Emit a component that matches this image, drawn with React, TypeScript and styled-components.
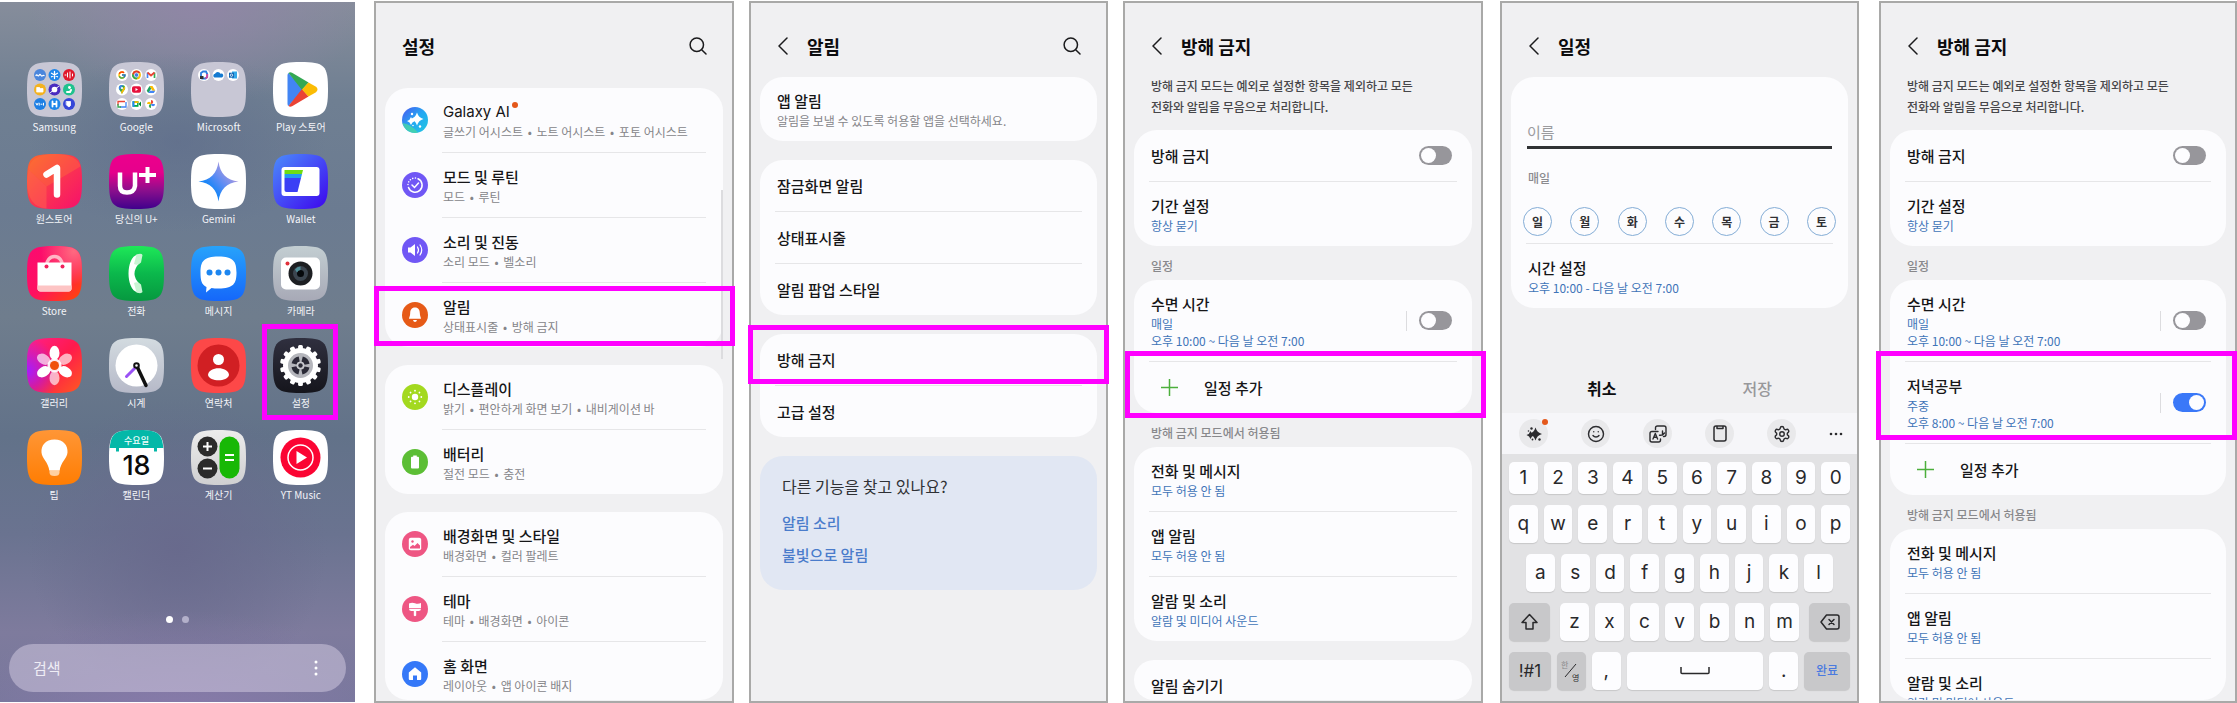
import React, { Fragment, useId } from "react";
import styled, { createGlobalStyle, css } from "styled-components";
import { FcGoogle } from "react-icons/fc";
import { Settings as GearIcon, Smile } from "lucide-react";

const GlobalStyle = createGlobalStyle`
  *, *::before, *::after { box-sizing: border-box; }
  body {
    margin: 0;
    background: #ffffff;
    font-family: "Noto Sans CJK KR", "Noto Sans", sans-serif;
    color: #1b1b1d;
  }
  button, input { font-family: inherit; }
  button {
    margin: 0;
    padding: 0;
    border: 0;
    background: none;
    color: inherit;
    text-align: left;
    cursor: pointer;
  }
  h1, h2, p { margin: 0; font-weight: inherit; }
`;

/* ---------- page and screens ---------- */

const Board = styled.main`
  display: grid;
  grid-template-columns: 355fr 19px 360fr 15px 359fr 15px 360fr 17px 359fr 20px 358fr;
  grid-template-rows: minmax(0, 1fr);
  height: 100vh;
  min-height: 680px;
  padding-top: 1px;
`;

const Screen = styled.section<{ $slot: number }>`
  grid-column: ${(p) => p.$slot * 2 - 1};
  position: relative;
  display: flex;
  flex-direction: column;
  min-width: 0;
  min-height: 0;
  padding-bottom: 1px;
  border: 2px solid #a9a9a8;
  background: #f0f0f2;
`;

const Header = styled.header`
  flex: none;
  display: flex;
  align-items: center;
  padding: 30px 25px 0 26px;
`;

const Heading = styled.h1`
  flex: 1;
  font-size: 18px;
  line-height: 26px;
  font-weight: 700;
  color: #0c0c0e;
`;

const IconButton = styled.button`
  display: grid;
  place-items: center;
`;

const BackButton = styled(IconButton)`
  width: 12px;
  height: 26px;
  margin-right: 18px;
`;

const Card = styled.section<{ $shrink?: boolean }>`
  flex: none;
  border-radius: 23px;
  background: #fcfcfe;
  ${(p) =>
    p.$shrink &&
    css`
      flex: 0 1 auto;
      min-height: 0;
      overflow: hidden;
    `}
`;

const CardStack = styled.div<{ $top: number; $gap?: number }>`
  flex: 0 1 auto;
  display: flex;
  flex-direction: column;
  min-height: 0;
  padding: ${(p) => p.$top}px 9px 0;
  & > section + section {
    margin-top: ${(p) => p.$gap ?? 19}px;
  }
`;

const Divider = styled.hr<{ $icon?: boolean }>`
  height: 1px;
  margin: 0 ${(p) => (p.$icon ? 17 : 15)}px 0 ${(p) => (p.$icon ? 57 : 15)}px;
  border: 0;
  background: #e6e6e8;
`;

const rowStyle = css<{ $h: number }>`
  position: relative;
  display: flex;
  align-items: center;
  width: 100%;
  height: ${(p) => p.$h}px;
  padding: 0 17px;
`;
const RowButton = styled.button<{ $h: number }>`
  ${rowStyle}
`;
const RowBox = styled.div<{ $h: number }>`
  ${rowStyle}
  padding-right: 20px;
`;

const RowIcon = styled.svg`
  flex: none;
  width: 26px;
  height: 26px;
  margin-right: 15px;
`;

const RowText = styled.span`
  flex: 1;
  display: flex;
  flex-direction: column;
  min-width: 0;
  white-space: nowrap;
`;

const RowTitle = styled.span<{ $latin?: boolean }>`
  font-size: 15px;
  line-height: 22px;
  font-weight: 500;
  color: #161618;
  ${(p) =>
    p.$latin &&
    css`
      font-family: Inter, "Noto Sans CJK KR", sans-serif;
      font-weight: 400;
    `}
`;

const RowSub = styled.span<{ $blue?: boolean }>`
  font-size: 12px;
  line-height: 17px;
  color: ${(p) => (p.$blue ? "#3f74b8" : "#858589")};
`;

const Bullet = styled.span`
  margin: 0 2px;
`;

const NewDot = styled.i`
  display: inline-block;
  width: 6px;
  height: 6px;
  margin-left: 2px;
  border-radius: 50%;
  background: #e4581b;
  vertical-align: 9px;
`;

const Highlight = styled.span<{ $edges: string }>`
  position: absolute;
  z-index: 2;
  inset: ${(p) => p.$edges};
  border: 5px solid #ff00ff;
  pointer-events: none;
`;

const ScrollThumb = styled.span`
  position: absolute;
  top: 187px;
  right: 9px;
  width: 2px;
  height: 169px;
  background: #dcdcdf;
`;

const Toggle = styled.input`
  appearance: none;
  flex: none;
  width: 33px;
  height: 19px;
  margin: 0;
  padding: 2px;
  border-radius: 10px;
  background: #97969b;
  cursor: pointer;
  &::before {
    content: "";
    display: block;
    width: 15px;
    height: 15px;
    border-radius: 50%;
    background: #fdfdff;
  }
  &:checked {
    background: #3a78f8;
  }
  &:checked::before {
    margin-left: 14px;
  }
`;

const ToggleRule = styled.span`
  width: 1px;
  height: 20px;
  margin-right: 12px;
  background: #dcdcdf;
`;

const SearchIcon = () => (
  <svg width="18" height="18" viewBox="0 0 18 18" fill="none" stroke="#1b1b1d" strokeWidth="1.5" strokeLinecap="round">
    <circle cx="7.8" cy="7.8" r="6.7" />
    <path d="M12.7 12.7 17 17" />
  </svg>
);

const BackIcon = () => (
  <svg width="12" height="18" viewBox="0 0 12 18" fill="none" stroke="#1b1b1d" strokeWidth="1.5" strokeLinecap="round" strokeLinejoin="round">
    <path d="M10 1 2 9l8 8" />
  </svg>
);

const TopBar = ({ title, back, search }: { title: string; back?: boolean; search?: boolean }) => (
  <Header>
    {back && (
      <BackButton type="button" aria-label="뒤로">
        <BackIcon />
      </BackButton>
    )}
    <Heading>{title}</Heading>
    {search && (
      <IconButton type="button" aria-label="검색">
        <SearchIcon />
      </IconButton>
    )}
  </Header>
);

interface RowProps {
  title: string;
  subs?: string[];
  blue?: boolean;
  icon?: React.ReactNode;
  latin?: boolean;
  edges?: string;
}

const rowHeight = (subs: string[]) => [51, 64, 81][subs.length];

const SubText = ({ text }: { text: string }) => (
  <>
    {text.split("•").map((part, i) => (
      <Fragment key={part}>
        {i > 0 && <Bullet>•</Bullet>}
        {part}
      </Fragment>
    ))}
  </>
);

const Row = ({ title, subs = [], blue, icon, latin, edges }: RowProps) => (
  <RowButton type="button" $h={rowHeight(subs)}>
    {icon && <RowIcon viewBox="-13 -13 26 26">{icon}</RowIcon>}
    <RowText>
      <RowTitle $latin={latin}>
        {title}
        {latin && <NewDot />}
      </RowTitle>
      {subs.map((s) => (
        <RowSub key={s} $blue={blue}>
          <SubText text={s} />
        </RowSub>
      ))}
    </RowText>
    {edges && <Highlight $edges={edges} />}
  </RowButton>
);

const ToggleRow = ({ title, subs = [], on, edges }: RowProps & { on?: boolean }) => {
  const id = useId();
  return (
    <RowBox $h={rowHeight(subs)}>
      <RowText>
        <RowTitle as="label" htmlFor={id}>
          {title}
        </RowTitle>
        {subs.map((s) => (
          <RowSub key={s} $blue>
            {s}
          </RowSub>
        ))}
      </RowText>
      {subs.length > 0 && <ToggleRule />}
      <Toggle id={id} type="checkbox" role="switch" defaultChecked={on} />
      {edges && <Highlight $edges={edges} />}
    </RowBox>
  );
};

/* ---------- home screen ---------- */

const Home = styled.section`
  grid-column: 1;
  display: flex;
  flex-direction: column;
  min-width: 0;
  margin: 1px 0;
  padding: 60px 9px 10px;
  background:
    radial-gradient(ellipse 150px 90px at 50% 20%, rgba(92, 106, 138, 0.6), rgba(92, 106, 138, 0) 100%),
    radial-gradient(ellipse 170px 100px at 56% 0%, #9086a6, rgba(144, 134, 166, 0) 100%),
    radial-gradient(ellipse 230px 120px at 50% 104%, #8a7bac, rgba(138, 123, 172, 0) 100%),
    radial-gradient(ellipse 150px 150px at 50% 78%, rgba(104, 105, 140, 0.9), rgba(104, 105, 140, 0) 100%),
    linear-gradient(180deg, #868d9b 0%, #6f7f92 14%, #6b7b91 30%, #6f7d8d 45%, #627289 62%, #6a7390 76%, #7e7b9d 90%, #77779b 100%);
`;

const AppGrid = styled.div`
  display: grid;
  grid-template-columns: repeat(4, 1fr);
  row-gap: 20px;
  padding: 0 4px;
`;

const AppButton = styled.button`
  position: relative;
  display: flex;
  flex-direction: column;
  align-items: center;
`;

const AppArt = styled.svg`
  width: 55px;
  height: 55px;
  overflow: visible;
`;

const AppLabel = styled.span`
  margin-top: 3px;
  font-size: 10px;
  line-height: 14px;
  color: #f3f4f8;
  white-space: nowrap;
`;

const Pager = styled.div`
  display: flex;
  justify-content: center;
  gap: 9px;
  margin-top: auto;
  padding-bottom: 21px;
`;

const PageDot = styled.span<{ $active?: boolean }>`
  width: 7px;
  height: 7px;
  border-radius: 50%;
  background: ${(p) => (p.$active ? "#ffffff" : "#b3b0ca")};
`;

const SearchBar = styled.form`
  display: flex;
  align-items: center;
  height: 48px;
  padding: 0 28px 0 24px;
  border-radius: 24px;
  background: rgba(214, 206, 228, 0.5);
`;

const SearchInput = styled.input`
  flex: 1;
  min-width: 0;
  padding: 0;
  border: 0;
  outline: 0;
  background: none;
  font-size: 15px;
  line-height: 22px;
  color: #ffffff;
  &::placeholder {
    color: #efedf5;
    opacity: 1;
  }
`;

const SQUIRCLE =
  "M0-27.5C24-27.5 27.5-24 27.5 0S24 27.5 0 27.5-27.5 24-27.5 0-24-27.5 0-27.5Z";

const Tile = ({ fill }: { fill: string }) => <path d={SQUIRCLE} fill={fill} />;

const Grad = ({ id, stops, diag }: { id: string; stops: string[]; diag?: boolean }) => (
  <linearGradient id={id} x1="0" y1="0" x2={diag ? "1" : "0"} y2="1">
    {stops.map((c, i) => (
      <stop key={c} offset={i / (stops.length - 1)} stopColor={c} />
    ))}
  </linearGradient>
);

const Mini = ({ x, y, fill = "#fff", children }: { x: number; y: number; fill?: string; children?: React.ReactNode }) => (
  <g transform={`translate(${x * 14.5} ${y * 14.5})`}>
    <circle r="6" fill={fill} stroke="none" />
    {children}
  </g>
);

const SamsungFolder = () => (
  <>
    <Tile fill="#c8c7d5" />
    <g fill="none" stroke="#fff" strokeWidth="1.3" strokeLinecap="round">
      <Mini x={-1} y={-1} fill="#4b86dc"><path d="M-4 .5c1-2 2 1.500 3 0s1-1.500 2 0 1.500-.5 3 0" /></Mini>
      <Mini x={0} y={-1} fill="#1f86ea"><path d="M0-3.500v7M-3-1.700l6 3.400M3-1.700l-6 3.400" /></Mini>
      <Mini x={1} y={-1} fill="#e0182c"><path d="M-4 0h1M-1.500-2v4M1-3v6M3.500-1v2" strokeWidth="1" /></Mini>
      <Mini x={-1} y={0} fill="#f3b220"><path d="M-3-2h2.500l1 1H3v3.500h-6z" fill="#fff" strokeWidth=".8" /></Mini>
      <Mini x={0} y={0} fill="#4a2cc0"><circle r="2.200" fill="#fff" /><path d="M-4 3 4-3" strokeWidth="1" /></Mini>
      <Mini x={1} y={0} fill="#1fc28e"><circle cx=".5" cy="-2" r=".8" fill="#fff" /><path d="M-2 2.500h3l1-2" strokeWidth="2" /></Mini>
      <Mini x={-1} y={1} fill="#1e7fe4"><path d="M-4-.8l1 2 1-2M-.8-.8v2M1 .2h1M3.500-.8v2" strokeWidth="1" /></Mini>
      <Mini x={0} y={1} fill="#1f86ea"><path d="M-2-2.500v5M2-2.500v5M-2 0h4" strokeWidth="1.800" /></Mini>
      <Mini x={1} y={1} fill="#3546d8"><path d="M-2.500-2.500h4v4l-1.500 1.500-2.500-2z" fill="#fff" strokeWidth=".8" /></Mini>
    </g>
  </>
);

const GoogleFolder = () => (
  <>
    <Tile fill="#c8c7d5" />
    <Mini x={-1} y={-1}><FcGoogle x={-4.5} y={-4.5} size={9} /></Mini>
    <Mini x={0} y={-1}>
      <circle r="4.500" fill="#fbc116" />
      <path d="M-4.200-1.500A4.500 4.500 0 0 1 4-2H0L-2 1Z" fill="#e33b2e" />
      <path d="M-4.200-1.500A4.500 4.500 0 0 0 0 4.500L2 1-2 1Z" fill="#2da94f" />
      <circle r="2.200" fill="#3f7ee8" stroke="#fff" strokeWidth=".7" />
    </Mini>
    <Mini x={1} y={-1}>
      <path d="M-3.500 3v-5.500" stroke="#4285f4" strokeWidth="1.700" />
      <path d="M3.500 3v-5.500" stroke="#34a853" strokeWidth="1.700" />
      <path d="M-3.500-2.500 0 .5l3.500-3" stroke="#ea4335" strokeWidth="1.800" fill="none" />
    </Mini>
    <Mini x={-1} y={0}>
      <path d="M0 4.800C-.5 2-3.200 1-3.200-1.400A3.200 3.200 0 0 1 3.200-1.400C3.200 1 .5 2 0 4.800Z" fill="#34a853" />
      <path d="M-3.200-1.400A3.200 3.200 0 0 1 1-4.400L-2.500.5Z" fill="#4285f4" />
      <path d="M3.200-1.400C3 1 .5 2 0 4.800L-1 2.500 2.500-3.200Z" fill="#fbbc04" />
      <circle cy="-1.400" r="1.100" fill="#fff" />
    </Mini>
    <Mini x={0} y={0}><rect x="-4.500" y="-3.200" width="9" height="6.400" rx="1.800" fill="#e6123d" /><path d="M-1-1.500 1.500 0-1 1.500Z" fill="#fff" /></Mini>
    <Mini x={1} y={0}>
      <path d="M-1.500-3.500h3L4.300 1.200H1.500Z" fill="#fbbc04" />
      <path d="M-1.500-3.500-4.300 1.200-2.800 3.500.2-.8Z" fill="#1ea362" />
      <path d="M-2.800 3.500h5.600L4.300 1.200H-1.300Z" fill="#4285f4" />
    </Mini>
    <Mini x={-1} y={1}><path d="M-4 1.500V-2.500H3" stroke="#ea4335" strokeWidth="1.300" fill="none" /><path d="M4-2v5H-2" stroke="#4285f4" strokeWidth="1.300" fill="none" /><path d="M-4 0v3h3" stroke="#34a853" strokeWidth="1.300" fill="none" /></Mini>
    <Mini x={0} y={1}><rect x="-4" y="-2.800" width="6" height="5.600" fill="#00ac47" /><path d="M-4-2.800h2v5.600h-2z" fill="#2684fc" /><path d="M-2-2.800h4V-1h-4z" fill="#ffba00" /><rect x="-2" y="-1" width="2.600" height="2" fill="#fff" /><path d="M2 0 4.500-2.500v5Z" fill="#00832d" /></Mini>
    <Mini x={1} y={1}><path d="M0 0V-4a2.200 2 0 0 1 0 4" fill="#ea4335" /><path d="M0 0H4a2 2.200 0 0 1-4 0" fill="#4285f4" /><path d="M0 0v4a2.200 2 0 0 1 0-4" fill="#34a853" /><path d="M0 0h-4a2 2.200 0 0 1 4 0" fill="#fbbc04" /></Mini>
  </>
);

const MicrosoftFolder = () => (
  <>
    <Tile fill="#c8c7d5" />
    <Mini x={-1} y={-1}><path d="M-3 2v-4l2-1.500H2L3.200-1v3L1.500 3.500H-2Z" fill="none" stroke="#2a7de0" strokeWidth="1.800" /><path d="M3.200-1v3L1.500 3.500" fill="none" stroke="#d0479c" strokeWidth="1.800" /><path d="M-4 1h3.500v3h-3.500z" fill="#333" /></Mini>
    <Mini x={0} y={-1}><path d="M-4 2.500a2 2 0 0 1 .5-3.800A3 3 0 0 1 2-1.300 2 2 0 0 1 3.500 2.500Z" fill="#1479d0" /></Mini>
    <Mini x={1} y={-1}><rect x="-1" y="-3.500" width="5" height="7" fill="#35a9e8" /><rect x="-4" y="-2.300" width="5" height="5" fill="#1066b5" /><circle cx="-1.500" cy=".2" r="1.200" fill="none" stroke="#fff" strokeWidth=".8" /></Mini>
  </>
);

const PlayStore = () => (
  <>
    <Tile fill="#fff" />
    <path d="M-13-14v28q0 2 1 2.500L3 0-12-16.500q-1 .5-1 2.500Z" fill="#4285f4" />
    <path d="M-12-16.500Q-10.500-18-8-16.500L8-7 1.500.5Z" fill="#34a853" />
    <path d="M-12 16.500Q-10.500 18-8 16.500L8 7 1.500-.5Z" fill="#ea4335" />
    <path d="M1.500 0 8-7l7.500 4.300q3 2.700 0 5.400L8 7Z" fill="#fbbc04" />
  </>
);

const OneStore = () => (
  <>
    <defs><Grad id="one" diag stops={["#fb6a2b", "#fb3550", "#f60f6c"]} /></defs>
    <Tile fill="url(#one)" />
    <path d="M26-15-8 5-26-12Q-24-27.500 0-27.500 23-27.500 26-15Z" fill="#ff7c3a" opacity=".35" />
    <path d="M-8 5v22Q-27 26-27.500 0L-26-12Z" fill="#ff6a50" opacity=".45" />
    <path d="M-8-7 2.500-13.500V13" fill="none" stroke="#fff" strokeWidth="6.500" strokeLinecap="round" strokeLinejoin="round" />
  </>
);

const UPlus = () => (
  <>
    <defs><Grad id="uplus" stops={["#ec008c", "#e6008c", "#8a0f8c", "#3f008c"]} /></defs>
    <Tile fill="url(#uplus)" />
    <path d="M-16.500-9V4.500Q-16.500 11-9.500 11T-1.500 4.500V-9" fill="none" stroke="#fff" strokeWidth="4.500" />
    <path d="M11-14.500V1.500M2.500-6.500h17" stroke="#fff" strokeWidth="4" />
  </>
);

const Gemini = () => (
  <>
    <defs>
      <linearGradient id="gemini" x1="0" y1="1" x2="1" y2=".1"><stop offset=".35" stopColor="#1d86f7" /><stop offset=".55" stopColor="#5d8cf4" /><stop offset="1" stopColor="#e3a3cf" /></linearGradient>
    </defs>
    <Tile fill="#fff" />
    <path d="M0-20C1.500-8 8-1.500 20 0 8 1.500 1.500 8 0 20-1.500 8-8 1.500-20 0-8-1.500-1.500-8 0-20Z" fill="url(#gemini)" />
  </>
);

const Wallet = () => (
  <>
    <defs><Grad id="wallet" diag stops={["#4b8dfb", "#4549f6", "#3c04ec"]} /></defs>
    <Tile fill="url(#wallet)" />
    <rect x="-19" y="-14.500" width="38" height="29" rx="3" fill="#fff" />
    <path d="M-16-11.500H2.500L1.500-7.500H-16Z" fill="#6fdc10" />
    <path d="M-16-7.500H1.500L.5-3.500H-16Z" fill="#2499ee" />
    <path d="M-16-3.500H.5L-3 10.500h-11q-2 0-2-2Z" fill="#3b3ff5" />
  </>
);

const Store = () => (
  <>
    <defs>
      <Grad id="store" diag stops={["#fb0a72", "#ff1060", "#ff4b00"]} />
      <radialGradient id="storeglow" cx=".85" cy=".1" r=".6">
        <stop offset="0" stopColor="#ff6a80" />
        <stop offset="1" stopColor="#ff6a80" stopOpacity="0" />
      </radialGradient>
    </defs>
    <Tile fill="url(#store)" />
    <Tile fill="url(#storeglow)" />
    <path d="M-8-8a8 9 0 0 1 16 0" fill="none" stroke="#ffb6c5" strokeWidth="3.500" />
    <path d="M-17-11h34v26q0 3-3 3h-28q-3 0-3-3Z" fill="#fff" />
    <path d="M-17 12h34v3q0 3-3 3h-28q-3 0-3-3Z" fill="#fdc4c4" />
    <circle cx="-8" cy="-7" r="2" fill="#f0215c" /><circle cx="8" cy="-7" r="2" fill="#f0215c" />
  </>
);

const Phone = () => (
  <>
    <defs><Grad id="phone" stops={["#1ee858", "#0bb84c", "#06983f"]} /></defs>
    <Tile fill="url(#phone)" />
    <path d="M1-19C-11-16-11 16 1 19L3 10.500Q-7 0 3-10.500Z" fill="#fff" />
    <path d="M0-19q5-1.500 6 .5l-1.500 7.500Q1-7.500-2.500-9.500ZM0 19q5 1.500 6-.5l-1.500-7.500Q1 7.500-2.500 9.500Z" fill="#c9f4d3" />
  </>
);

const Messages = () => (
  <>
    <defs><Grad id="msg" stops={["#27a3fb", "#1567fa"]} /></defs>
    <Tile fill="url(#msg)" />
    <path d="M0-17C15-17 18-12 18-1S15 15 0 15q-4 0-7-.5L-12.500 19-12 13.500C-17 11-18 7-18-1-18-12-15-17 0-17Z" fill="#fff" />
    <g fill="#1d86f0"><circle cx="-9" cy="-1" r="3" /><circle cy="-1" r="3" /><circle cx="9" cy="-1" r="3" /></g>
  </>
);

const Camera = () => (
  <>
    <defs><Grad id="cam" stops={["#c3ced2", "#a7a9b6"]} /></defs>
    <Tile fill="url(#cam)" />
    <rect x="-19.500" y="-16" width="39" height="32" rx="5" fill="#fff" />
    <circle r="12" fill="#1d1f22" /><circle r="7.500" fill="#3c4650" /><circle r="3.500" fill="#06090c" />
    <path d="M-5.500-4A7 7 0 0 1 0-7V-3.500A4 4 0 0 0-3.500-1Z" fill="#4f8e98" />
    <circle cx="-13" cy="-10" r="2" fill="#e0303a" />
  </>
);

const Gallery = () => (
  <>
    <defs>
      <Grad id="gal" diag stops={["#ff1f8c", "#ff1a4c", "#ff5a20"]} />
      <radialGradient id="galglow" cx="0" cy=".6" r=".6">
        <stop offset="0" stopColor="#a51cff" />
        <stop offset="1" stopColor="#a51cff" stopOpacity="0" />
      </radialGradient>
    </defs>
    <Tile fill="url(#gal)" />
    <Tile fill="url(#galglow)" />
    {[0, 60, 120, 180, 240, 300].map((a) => (
      <ellipse key={a} cy="-12.500" rx="5" ry="7.200" fill="#fff" opacity={a % 120 === 0 ? 1 : 0.65} transform={`rotate(${a})`} />
    ))}
    <circle r="7" fill="#fff" opacity=".9" /><circle r="4.500" fill="#f0500c" />
  </>
);

const Clock = () => (
  <>
    <defs><Grad id="clk" stops={["#d3dbe0", "#b6b9c8"]} /></defs>
    <Tile fill="url(#clk)" />
    <circle r="21" fill="#fff" />
    <path d="M-1 2-10 11" stroke="#9a52f5" strokeWidth="3" strokeLinecap="round" />
    <path d="M1 2 9.500 20" stroke="#111" strokeWidth="3.500" strokeLinecap="round" />
    <circle r="2.300" fill="#fff" stroke="#111" strokeWidth="2" />
  </>
);

const Contacts = () => (
  <>
    <Tile fill="#fd4848" />
    <circle r="21" fill="#d11f23" />
    <circle cy="-6" r="5.500" fill="#fff" />
    <path d="M-10.500 9.500C-10 .5 10 .5 10.500 9.500 9 16.500-9 16.500-10.500 9.500Z" fill="#fff" />
  </>
);

const SettingsApp = () => (
  <>
    <defs><Grad id="set" stops={["#30303f", "#15151c"]} /></defs>
    <Tile fill="url(#set)" />
    {Array.from({ length: 14 }, (_, i) => (
      <rect key={i} x="-2.400" y="-20.500" width="4.800" height="6" rx="1.500" fill="#fff" transform={`rotate(${(i * 360) / 14})`} />
    ))}
    <circle r="17.500" fill="#fff" />
    <circle r="12.500" fill="#b5b6bc" />
    <circle r="6.700" fill="none" stroke="#2a2a36" strokeWidth="5" strokeDasharray="7.500 3.024" strokeDashoffset="-1.500" />
    <circle r="3.800" fill="#c9c9ce" /><circle r="2.200" fill="#2a2a36" />
  </>
);

const Tips = () => (
  <>
    <defs><Grad id="tips" stops={["#ff9636", "#ff7d02"]} /></defs>
    <Tile fill="url(#tips)" />
    <path d="M-5 13h10v2q0 3.500-5 3.500T-5 15Z" fill="#ffd0a0" />
    <path d="M0-18C9-18 13.500-12 13-5 12.500 1 6 5 5.200 13H-5.200C-6 5-12.500 1-13-5-13.500-12-9-18 0-18Z" fill="#fff" />
  </>
);

const CalendarApp = () => (
  <>
    <Tile fill="#fff" />
    <path d="M-26.800-9.500C-25.500-25.500-20-27.500 0-27.500S25.500-25.500 26.800-9.500Z" fill="#04b8a8" />
    <path d="M-19-12v6M19-12v6" stroke="#04b8a8" strokeWidth="3" />
    <text y="-14" textAnchor="middle" fontSize="9" fontWeight="500" fill="#f2fffd">수요일</text>
    <text y="17" textAnchor="middle" fontSize="27" fontFamily="Inter, sans-serif" fontWeight="500" fill="#0b0b0b">18</text>
  </>
);

const Calculator = () => (
  <>
    <defs><Grad id="calc" stops={["#ececec", "#cfcfd1"]} /></defs>
    <Tile fill="url(#calc)" />
    <circle cx="-11" cy="-11" r="10" fill="#2b2b2b" /><circle cx="-11" cy="11" r="10" fill="#2b2b2b" />
    <rect x="1" y="-21" width="20" height="42" rx="10" fill="#18b806" />
    <path d="M-15.500-11h9M-11-15.500v9M-15.500 11h9M6.500-2.500h9M6.500 2.500h9" stroke="#fff" strokeWidth="2" />
  </>
);

const YTMusic = () => (
  <>
    <Tile fill="#fff" />
    <circle r="20" fill="#fb0533" />
    <circle r="12.500" fill="none" stroke="#fff" strokeWidth="1.500" />
    <path d="M-4-6.500 6.500 0-4 6.500Z" fill="#fff" />
  </>
);

const apps: { name: string; Art: () => React.ReactElement; edges?: string }[] = [
  { name: "Samsung", Art: SamsungFolder },
  { name: "Google", Art: GoogleFolder },
  { name: "Microsoft", Art: MicrosoftFolder },
  { name: "Play 스토어", Art: PlayStore },
  { name: "원스토어", Art: OneStore },
  { name: "당신의 U+", Art: UPlus },
  { name: "Gemini", Art: Gemini },
  { name: "Wallet", Art: Wallet },
  { name: "Store", Art: Store },
  { name: "전화", Art: Phone },
  { name: "메시지", Art: Messages },
  { name: "카메라", Art: Camera },
  { name: "갤러리", Art: Gallery },
  { name: "시계", Art: Clock },
  { name: "연락처", Art: Contacts },
  { name: "설정", Art: SettingsApp, edges: "-14px 4px -10px 2px" },
  { name: "팁", Art: Tips },
  { name: "캘린더", Art: CalendarApp },
  { name: "계산기", Art: Calculator },
  { name: "YT Music", Art: YTMusic },
];

const HomeScreen = () => (
  <Home>
    <AppGrid>
      {apps.map(({ name, Art, edges }) => (
        <AppButton type="button" key={name}>
          <AppArt viewBox="-27.5 -27.5 55 55"><Art /></AppArt>
          <AppLabel>{name}</AppLabel>
          {edges && <Highlight $edges={edges} />}
        </AppButton>
      ))}
    </AppGrid>
    <Pager>
      <PageDot $active />
      <PageDot />
    </Pager>
    <SearchBar>
      <SearchInput type="search" placeholder="검색" aria-label="검색" />
      <IconButton type="button" aria-label="더보기">
        <svg width="4" height="18" viewBox="0 0 4 18" fill="#fff">
          <circle cx="2" cy="3" r="1.500" /><circle cx="2" cy="9" r="1.500" /><circle cx="2" cy="15" r="1.500" />
        </svg>
      </IconButton>
    </SearchBar>
  </Home>
);

/* ---------- settings screen ---------- */

const Disc = ({ fill }: { fill: string }) => <circle r="13" fill={fill} />;
const star = (x: number, y: number, r: number) => {
  const k = r * 0.22;
  return `M${x} ${y - r}Q${x + k} ${y - k} ${x + r} ${y}Q${x + k} ${y + k} ${x} ${y + r}Q${x - k} ${y + k} ${x - r} ${y}Q${x - k} ${y - k} ${x} ${y - r}Z`;
};

const aiIcon = (
  <>
    <defs><Grad id="ai" diag stops={["#4a55f0", "#23a8f2", "#22c8e0"]} /></defs>
    <Disc fill="url(#ai)" />
    <path d="M-12.500 3Q-4 4 3 12.600A13 13 0 0 1-12.500 3Z" fill="#4fdc9a" opacity=".7" />
    <path d={star(2, -1, 6.5) + star(-4, 1, 4)} fill="#fff" />
    <g fill="#fff"><circle cx="-3" cy="-6" r="1.200" /><circle cx="5" cy="6.500" r="1.200" /><circle cx="-2" cy="5.500" r=".8" /></g>
  </>
);
const modesIcon = (
  <>
    <Disc fill="#7057f5" />
    <g fill="none" stroke="#fff" strokeWidth="1.500" strokeLinecap="round">
      <path d="M3-6.200A7 7 0 1 1-6.500 2.500" /><path d="M-7-.5A7 7 0 0 1 1-6.900" strokeDasharray=".1 2.600" /><path d="M-3 0-.5 2.500 3.500-2" />
    </g>
  </>
);
const soundIcon = (
  <>
    <Disc fill="#7057f5" />
    <path d="M-7-2.500h2.500L0-6V6L-4.500 2.500H-7Z" fill="#fff" />
    <path d="M2.500-3q2 3 0 6M5-5q3.500 5 0 10" fill="none" stroke="#fff" strokeWidth="1.200" strokeLinecap="round" />
  </>
);
const bellIcon = (
  <>
    <Disc fill="#e65a17" />
    <path d="M0-7.500C3.500-7.500 4.800-5 4.800-2 4.800 1 6 2.500 6 3.800H-6C-6 2.500-4.800 1-4.800-2-4.800-5-3.500-7.500 0-7.500ZM-2 5H2Q1.500 7 0 7T-2 5Z" fill="#fff" />
  </>
);
const displayIcon = (
  <>
    <Disc fill="#a3d91f" />
    <circle r="3.200" fill="#fff" />
    {[0, 45, 90, 135, 180, 225, 270, 315].map((a) => <circle key={a} cy="-6.300" r=".9" fill="#fff" transform={`rotate(${a})`} />)}
  </>
);
const batteryIcon = (
  <>
    <Disc fill="#5cbe35" />
    <path d="M-1.800-6.500H1.800V-5.300H3Q4-5.300 4-4.300V5.500Q4 6.500 3 6.500H-3Q-4 6.500-4 5.500V-4.300Q-4-5.300-3-5.300H-1.800Z" fill="#fff" />
  </>
);
const wallpaperIcon = (
  <>
    <Disc fill="#ee5683" />
    <rect x="-6.200" y="-6.200" width="12.400" height="12.400" rx="2" fill="#fff" />
    <circle cx="-2.500" cy="-2.500" r="1.200" fill="#ee5683" />
    <path d="M-5 4.500V3L-2 .8-.5 2 2.500-1 5 1.500V4.500Z" fill="#ee5683" />
  </>
);
const themeIcon = (
  <>
    <Disc fill="#ee5683" />
    <path d="M-6-5.500Q-3-7 0-5.800T6-6V-1H-6ZM-6-.2H6Q6 2 3.500 2H1.200V6.500Q0 8-1.200 6.500V2H-3.500Q-6 2-6-.2Z" fill="#fff" />
  </>
);
const homeIcon = (
  <>
    <Disc fill="#3578f8" />
    <path d="M0-6.800 6.200-1.500V5Q6.200 6 5.200 6H2V1.500H-2V6H-5.200Q-6.200 6-6.200 5V-1.500Z" fill="#fff" />
  </>
);

const SettingsScreen = () => (
  <Screen $slot={2}>
    <TopBar title="설정" search />
    <CardStack $top={29} $gap={18}>
      <Card>
        <Row title="Galaxy AI" latin subs={["글쓰기 어시스트 • 노트 어시스트 • 포토 어시스트"]} icon={aiIcon} />
        <Divider $icon />
        <Row title="모드 및 루틴" subs={["모드 • 루틴"]} icon={modesIcon} />
        <Divider $icon />
        <Row title="소리 및 진동" subs={["소리 모드 • 벨소리"]} icon={soundIcon} />
        <Divider $icon />
        <Row title="알림" subs={["상태표시줄 • 방해 금지"]} icon={bellIcon} edges="3px -12px 1px -11px" />
      </Card>
      <Card>
        <Row title="디스플레이" subs={["밝기 • 편안하게 화면 보기 • 내비게이션 바"]} icon={displayIcon} />
        <Divider $icon />
        <Row title="배터리" subs={["절전 모드 • 충전"]} icon={batteryIcon} />
      </Card>
      <Card $shrink>
        <Row title="배경화면 및 스타일" subs={["배경화면 • 컬러 팔레트"]} icon={wallpaperIcon} />
        <Divider $icon />
        <Row title="테마" subs={["테마 • 배경화면 • 아이콘"]} icon={themeIcon} />
        <Divider $icon />
        <Row title="홈 화면" subs={["레이아웃 • 앱 아이콘 배지"]} icon={homeIcon} />
      </Card>
    </CardStack>
    <ScrollThumb />
  </Screen>
);

/* ---------- notifications screen ---------- */

const SuggestCard = styled(Card)`
  display: flex;
  flex-direction: column;
  align-items: flex-start;
  padding: 18px 22px 24px;
  background: #e1e7f3;
`;

const SuggestTitle = styled.h2`
  margin-bottom: 4px;
  font-size: 16px;
  line-height: 24px;
  color: #2f3135;
`;

const SuggestLink = styled.a`
  margin-top: 10px;
  font-size: 15px;
  line-height: 22px;
  font-weight: 500;
  color: #4a7ccb;
  text-decoration: none;
`;

const NotificationScreen = () => (
  <Screen $slot={3}>
    <TopBar title="알림" back search />
    <CardStack $top={18}>
      <Card>
        <Row title="앱 알림" subs={["알림을 보낼 수 있도록 허용할 앱을 선택하세요."]} />
      </Card>
      <Card>
        <Row title="잠금화면 알림" />
        <Divider />
        <Row title="상태표시줄" />
        <Divider />
        <Row title="알림 팝업 스타일" />
      </Card>
      <Card>
        <Row title="방해 금지" edges="-9px -12px 1px -12px" />
        <Divider />
        <Row title="고급 설정" />
      </Card>
      <SuggestCard>
        <SuggestTitle>다른 기능을 찾고 있나요?</SuggestTitle>
        <SuggestLink href="#sound">알림 소리</SuggestLink>
        <SuggestLink href="#flash">불빛으로 알림</SuggestLink>
      </SuggestCard>
    </CardStack>
  </Screen>
);

/* ---------- do not disturb screens ---------- */

const Intro = styled.p`
  padding: 0 17px 13px;
  font-size: 12px;
  line-height: 21px;
  font-weight: 500;
  color: #47474a;
`;

const GroupLabel = styled.h2`
  padding: 11px 17px 5px;
  font-size: 12px;
  line-height: 18px;
  font-weight: 500;
  color: #88888b;
`;

const AddIcon = styled.svg`
  width: 17px;
  height: 17px;
  margin: 0 26px 0 10px;
`;

const AddRow = ({ edges }: { edges?: string }) => (
  <RowButton type="button" $h={51}>
    <AddIcon viewBox="0 0 17 17" stroke="#4caf3c" strokeWidth="1.500">
      <path d="M8.500 0v17M0 8.500h17" />
    </AddIcon>
    <RowTitle>일정 추가</RowTitle>
    {edges && <Highlight $edges={edges} />}
  </RowButton>
);

const DisturbScreen = ({ slot, withStudy }: { slot: number; withStudy?: boolean }) => (
  <Screen $slot={slot}>
    <TopBar title="방해 금지" back />
    <CardStack $top={16}>
      <Intro>
        방해 금지 모드는 예외로 설정한 항목을 제외하고 모든
        <br />
        전화와 알림을 무음으로 처리합니다.
      </Intro>
      <Card>
        <ToggleRow title="방해 금지" />
        <Divider />
        <Row title="기간 설정" subs={["항상 묻기"]} blue />
      </Card>
      <GroupLabel>일정</GroupLabel>
      <Card>
        <ToggleRow title="수면 시간" subs={["매일", "오후 10:00 ~ 다음 날 오전 7:00"]} />
        <Divider />
        {withStudy && (
          <>
            <ToggleRow title="저녁공부" subs={["주중", "오후 8:00 ~ 다음 날 오전 7:00"]} on edges="-11px -11px 3px -14px" />
            <Divider />
          </>
        )}
        <AddRow edges={withStudy ? undefined : "-11px -14px -5px -9px"} />
      </Card>
      <GroupLabel>방해 금지 모드에서 허용됨</GroupLabel>
      <Card $shrink={withStudy}>
        <Row title="전화 및 메시지" subs={["모두 허용 안 됨"]} blue />
        <Divider />
        <Row title="앱 알림" subs={["모두 허용 안 됨"]} blue />
        <Divider />
        <Row title="알람 및 소리" subs={["알람 및 미디어 사운드"]} blue />
      </Card>
      {!withStudy && (
        <Card $shrink>
          <Row title="알림 숨기기" />
        </Card>
      )}
    </CardStack>
  </Screen>
);

/* ---------- schedule screen ---------- */

const NameInput = styled.input`
  display: block;
  width: calc(100% - 32px);
  height: 33px;
  margin: 39px 16px 0;
  padding: 0;
  border: 0;
  border-bottom: 3px solid #303234;
  outline: 0;
  background: none;
  font-size: 15px;
  line-height: 22px;
  &::placeholder {
    color: #9b9b9e;
    opacity: 1;
  }
`;

const EveryDay = styled.p`
  padding: 20px 17px 20px;
  font-size: 12px;
  line-height: 18px;
  font-weight: 500;
  color: #8b8b8f;
`;

const Days = styled.div`
  display: flex;
  justify-content: space-between;
  padding: 0 12px 7px;
`;

const DayButton = styled.button`
  width: 29px;
  height: 29px;
  border: 1px solid #84add6;
  border-radius: 50%;
  font-size: 12px;
  line-height: 27px;
  font-weight: 700;
  color: #303033;
  text-align: center;
`;

const Actions = styled.div`
  display: flex;
  margin-top: auto;
  padding: 0 22px;
`;

const ActionButton = styled.button<{ $muted?: boolean }>`
  flex: 1;
  height: 51px;
  font-size: 16px;
  line-height: 24px;
  font-weight: ${(p) => (p.$muted ? 500 : 700)};
  color: ${(p) => (p.$muted ? "#98989b" : "#0c0c0e")};
  text-align: center;
`;

const Toolbar = styled.div`
  display: flex;
  align-items: center;
  justify-content: space-between;
  height: 41px;
  padding: 0 14px 0 17px;
  background: #f6f6f9;
`;

const Tool = styled(IconButton)`
  position: relative;
  width: 29px;
  height: 29px;
  border-radius: 50%;
  background: #e9e9eb;
  color: #2c2c2f;
`;

const ToolBadge = styled.span`
  position: absolute;
  top: 0;
  right: 0;
  width: 6px;
  height: 6px;
  border-radius: 50%;
  background: #e4581b;
`;

const Keyboard = styled.div`
  display: flex;
  flex-direction: column;
  gap: 11px;
  margin-bottom: -1px;
  padding: 8px 7px 11px;
  background: #e2e2e4;
`;

const KeyRow = styled.div<{ $inset?: boolean; $h?: number }>`
  display: flex;
  gap: 6px;
  height: ${(p) => p.$h ?? 38}px;
  padding: 0 ${(p) => (p.$inset ? 17 : 0)}px;
`;

const Key = styled.button<{ $grow?: number; $dark?: boolean }>`
  flex: ${(p) => p.$grow ?? 29} 1 0;
  display: grid;
  place-items: center;
  min-width: 0;
  border-radius: 5px;
  background: ${(p) => (p.$dark ? "#c8c8ca" : "#fdfdff")};
  box-shadow: 0 1px 1px rgba(0, 0, 0, 0.12);
  font-family: Inter, "Noto Sans CJK KR", sans-serif;
  font-size: 19px;
  line-height: 24px;
  color: #29292b;
`;

const LetterGroup = styled.div`
  flex: 239 1 0;
  display: flex;
  gap: 6px;
  margin: 0 4px;
`;

const SmallKey = styled(Key)`
  font-size: 12px;
  font-weight: 500;
  color: #4a7ae0;
`;

const SymbolKey = styled(Key)`
  font-size: 17px;
`;

const keys = (s: string) => s.split("").map((k) => <Key type="button" key={k}>{k}</Key>);

const ScheduleScreen = () => (
  <Screen $slot={5}>
    <TopBar title="일정" back />
    <CardStack $top={18}>
      <Card>
        <NameInput placeholder="이름" aria-label="이름" />
        <EveryDay>매일</EveryDay>
        <Days>
          {["일", "월", "화", "수", "목", "금", "토"].map((d) => (
            <DayButton type="button" key={d}>{d}</DayButton>
          ))}
        </Days>
        <Divider />
        <Row title="시간 설정" subs={["오후 10:00 - 다음 날 오전 7:00"]} blue />
      </Card>
    </CardStack>
    <Actions>
      <ActionButton type="button">취소</ActionButton>
      <ActionButton type="button" $muted>저장</ActionButton>
    </Actions>
    <Toolbar>
      <Tool type="button" aria-label="AI">
        <svg width="18" height="18" viewBox="-9 -9 18 18" fill="currentColor">
          <path d={star(1.5, 0, 6.5) + star(-3.5, 1, 4)} />
          <circle cx="-2.500" cy="-5.500" r="1.200" /><circle cx="-5.500" cy="-3" r=".8" /><circle cx="5.500" cy="5.500" r="1.200" /><circle cx="-1.500" cy="5.500" r=".9" />
        </svg>
        <ToolBadge />
      </Tool>
      <Tool type="button" aria-label="이모티콘"><Smile size={18} strokeWidth={1.9} /></Tool>
      <Tool type="button" aria-label="번역">
        <svg width="18" height="18" viewBox="0 0 18 18" fill="none" stroke="currentColor" strokeWidth="1.400" strokeLinecap="round" strokeLinejoin="round">
          <path d="M6.500 4.500V3q0-2 2-2H15q2 0 2 2v6.500q0 2-2 2h-.500" />
          <path d="M9 6.500H3q-2 0-2 2V15q0 2 2 2h6.500q2 0 2-2v-1" />
          <path d="m4 14 2.300-5.500L8.600 14M4.800 12.300h3M13.500 6v4M10.500 10.200q3 .5 5-2.200" />
        </svg>
      </Tool>
      <Tool type="button" aria-label="클립보드">
        <svg width="14" height="17" viewBox="0 0 14 17" fill="none" stroke="currentColor" strokeWidth="1.500" strokeLinejoin="round">
          <rect x="1" y="1" width="12" height="15" rx="2" /><path d="M4 1v2.500h6V1" />
        </svg>
      </Tool>
      <Tool type="button" aria-label="설정"><GearIcon size={18} strokeWidth={1.9} /></Tool>
      <IconButton type="button" aria-label="더보기">
        <svg width="14" height="4" viewBox="0 0 14 4" fill="#2c2c2f">
          <circle cx="2" cy="2" r="1.300" /><circle cx="7" cy="2" r="1.300" /><circle cx="12" cy="2" r="1.300" />
        </svg>
      </IconButton>
    </Toolbar>
    <Keyboard>
      <KeyRow $h={32}>{keys("1234567890")}</KeyRow>
      <KeyRow>{keys("qwertyuiop")}</KeyRow>
      <KeyRow $inset>{keys("asdfghjkl")}</KeyRow>
      <KeyRow>
        <Key type="button" $grow={41} $dark aria-label="Shift">
          <svg width="17" height="18" viewBox="0 0 17 18" fill="none" stroke="currentColor" strokeWidth="1.500" strokeLinejoin="round">
            <path d="M8.500 1.500 16 9.500H12V16H5V9.500H1Z" />
          </svg>
        </Key>
        <LetterGroup>{keys("zxcvbnm")}</LetterGroup>
        <Key type="button" $grow={41} $dark aria-label="지우기">
          <svg width="20" height="16" viewBox="0 0 20 16" fill="none" stroke="currentColor" strokeWidth="1.500" strokeLinejoin="round">
            <path d="M6.500 1H17q2 0 2 2v10q0 2-2 2H6.500L1 8Z" /><path d="m9 5.500 5 5m0-5-5 5" strokeLinecap="round" />
          </svg>
        </Key>
      </KeyRow>
      <KeyRow>
        <SymbolKey type="button" $grow={42} $dark>!#1</SymbolKey>
        <Key type="button" $dark aria-label="한/영">
          <svg width="22" height="24" viewBox="0 0 22 24">
            <text x="1" y="9" fontSize="8" fill="#88888b">한</text>
            <text x="12" y="22" fontSize="8" fill="#29292b">영</text>
            <path d="M5 18 16 5" stroke="#29292b" />
          </svg>
        </Key>
        <Key type="button">,</Key>
        <Key type="button" $grow={137} aria-label="스페이스">
          <svg width="30" height="8" viewBox="0 0 30 8" fill="none" stroke="currentColor" strokeWidth="1.500">
            <path d="M1 0v5.500q0 1 1 1h26q1 0 1-1V0" />
          </svg>
        </Key>
        <Key type="button">.</Key>
        <SmallKey type="button" $grow={46} $dark>완료</SmallKey>
      </KeyRow>
    </Keyboard>
  </Screen>
);

export default function App() {
  return (
    <>
      <GlobalStyle />
      <Board>
        <HomeScreen />
        <SettingsScreen />
        <NotificationScreen />
        <DisturbScreen slot={4} />
        <ScheduleScreen />
        <DisturbScreen slot={6} withStudy />
      </Board>
    </>
  );
}
